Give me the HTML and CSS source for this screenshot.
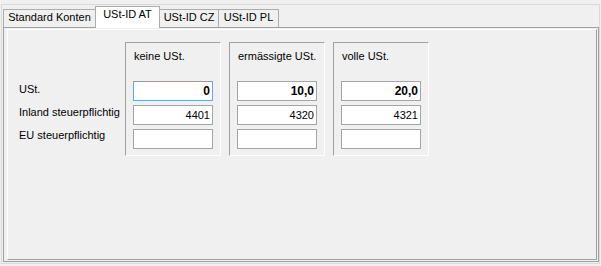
FILE: index.html
```html
<!DOCTYPE html>
<html>
<head>
<meta charset="utf-8">
<link rel="stylesheet" href="styles.css">
</head>
<body>
<div class="outer">
  <div class="tabctl">
    <div class="tabs">
      <div class="tab t1">Standard Konten</div>
      <div class="tab active">USt-ID AT</div>
      <div class="tab t3">USt-ID CZ</div>
      <div class="tab t4">USt-ID PL</div>
    </div>
    <div class="page">
      <div class="panel">
        <div class="labels">
          <div class="lbl">USt.</div>
          <div class="lbl">Inland steuerpflichtig</div>
          <div class="lbl">EU steuerpflichtig</div>
        </div>
        <div class="group">
          <div class="gh">keine USt.</div>
          <div class="field bold focus">0</div>
          <div class="field">4401</div>
          <div class="field"></div>
        </div>
        <div class="group">
          <div class="gh">ermässigte USt.</div>
          <div class="field bold">10,0</div>
          <div class="field">4320</div>
          <div class="field"></div>
        </div>
        <div class="group">
          <div class="gh">volle USt.</div>
          <div class="field bold">20,0</div>
          <div class="field">4321</div>
          <div class="field"></div>
        </div>
      </div>
    </div>
  </div>
</div>
</body>
</html>
```

FILE: styles.css
```css
html, body {
  margin: 0;
  background: #f0f0f0;
  width: 601px;
  height: 266px;
  overflow: hidden;
}
body {
  padding: 4px 0 0 1px;
  box-sizing: border-box;
  font: 11px/13px "Liberation Sans", Arial, sans-serif;
  color: #000;
}
.outer {
  width: 599px;
  height: 260px;
  box-sizing: border-box;
  border: 1px solid #dadada;
}
.tabctl {
  margin: 1px 0 0 1px;
  width: 596px;
}
.tabs {
  display: flex;
  align-items: flex-end;
  height: 21px;
}
.tab {
  box-sizing: border-box;
  height: 18px;
  border: 1px solid #acacac;
  border-bottom: none;
  background: #f0f0f0;
  text-align: center;
  padding-top: 1px;
  white-space: nowrap;
}
.t1 { width: 93px; }
.active {
  position: relative;
  z-index: 1;
  width: 65px;
  height: 22px;
  margin: 0 0 -1px -1px;
  background: #fff;
}
.t3 { width: 60px; margin-left: -1px; }
.t4 { width: 61px; margin-left: -1px; }
.page {
  box-sizing: border-box;
  height: 235px;
  border: 1px solid #a0a0a0;
  padding: 1px 1px 1px 3px;
}
.panel {
  box-sizing: border-box;
  height: 231px;
  border-top: 1px solid #fff;
  border-left: 1px solid #fff;
  border-right: 1px solid #a0a0a0;
  border-bottom: 1px solid #a0a0a0;
  display: flex;
  align-items: flex-start;
  padding: 12px 0 0 11px;
}
.labels {
  width: 106px;
  padding-top: 41px;
}
.lbl {
  height: 23px;
}
.group {
  box-sizing: border-box;
  width: 96px;
  height: 114px;
  margin-right: 8px;
  border-top: 1px solid #a0a0a0;
  border-left: 1px solid #a0a0a0;
  border-right: 1px solid #fff;
  border-bottom: 1px solid #fff;
  padding: 7px 7px 0 7px;
}
.gh {
  height: 13px;
  margin: 0 0 18px 1px;
  white-space: nowrap;
}
.field {
  box-sizing: border-box;
  height: 20px;
  margin-bottom: 4px;
  border: 1px solid #a5a5a5;
  background: #fff;
  text-align: right;
  padding-right: 2px;
  line-height: 18px;
}
.bold { font-weight: bold; font-size: 12px; }
.focus { border-color: #6ea3df; }
```
